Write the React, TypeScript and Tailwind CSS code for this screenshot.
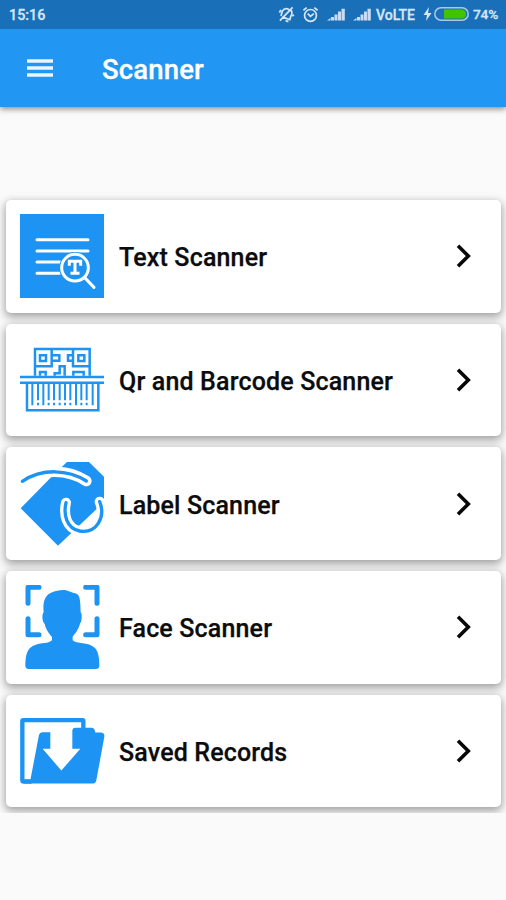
import type { ReactNode } from 'react';

const BLUE = '#1d94f3';

function TextIcon() {
  return (
    <svg viewBox="60 72 252 252" className="size-[84px]" fill="none" stroke="#fff" strokeLinecap="round">
      <rect x="60" y="72" width="252" height="252" fill={BLUE} stroke="none" />
      <path d="M111 149H264M111 183H264M111 216H180M111 250H178" strokeWidth="9" />
      <circle cx="225" cy="233" r="47" fill={BLUE} stroke="none" />
      <circle cx="225" cy="233" r="40" strokeWidth="9" />
      <path d="M254 263L282 292" strokeWidth="9" />
      <path d="M208 223V214H242V223M225 215V250M216 250H234" strokeWidth="9" strokeLinecap="square" />
    </svg>
  );
}

function CodeIcon() {
  return (
    <svg viewBox="60 70 252 252" className="size-[84px]" fill="none" stroke={BLUE} strokeWidth="7.500">
      <path d="M105 183V103H269V183M105 155H155V103M219 103V155H269" />
      <path d="M120 122H138V139H120ZM235 122H253V139H235Z" />
      <path d="M155 122H178V138H155M219 122H204V138H219M120 183V172H137V183M164 183V176H179V155H194V183M220 183V172H251V183" />
      <path d="M60 187H313M60 204H313" />
      <path d="M81 204V287H295V204" />
      <path d="M97 207V272M114 207V257M130 207V272M146 207V257M162 207V257M179 207V257M195 207V257M211 207V257M228 207V272M244 207V257M260 207V257M278 207V272" strokeWidth="6" />
      <path d="M114 264V272M146 264V272M162 264V272M179 264V272M195 264V272M211 264V272M244 264V272M260 264V272" strokeWidth="6" />
    </svg>
  );
}

function LabelIcon() {
  return (
    <svg viewBox="60 66 252 252" className="size-[84px] overflow-visible" fill="none" strokeLinecap="round">
      <path d="M201 66H267L312 110V186L174 317L62 205L157 108Z" fill={BLUE} />
      <path d="M67 124C126 84 205 88 259 123" stroke="#fff" strokeWidth="32" />
      <path d="M67 124C126 84 205 88 259 123" stroke={BLUE} strokeWidth="10" />
      <path d="M198 188C190 224 199 265 239 273C289 281 318 233 299 185" stroke="#fff" strokeWidth="30" />
      <path d="M198 188C190 224 199 265 239 273C289 281 318 233 299 185" stroke={BLUE} strokeWidth="10" />
    </svg>
  );
}

function FaceIcon() {
  return (
    <svg viewBox="60 71 252 252" className="size-[84px]">
      <path d="M117 78H84V126M257 78H291V126M84 172V220H117M291 172V220H257" fill="none" stroke={BLUE} strokeWidth="15" strokeLinecap="round" strokeLinejoin="round" />
      <path d="M187 86C204 85 213 94 226 96C241 99 241 120 242 153C247 157 246 181 240 187C234 209 225 215 218 226V237C230 249 264 241 285 260C295 270 298 291 298 314Q297 323 288 323H86Q77 323 76 314C76 291 79 270 90 260C111 241 144 250 156 237V227C147 216 139 208 134 188C126 181 125 159 131 153C129 128 131 112 145 99C158 90 171 87 187 86Z" fill={BLUE} />
    </svg>
  );
}

function FolderIcon() {
  return (
    <svg viewBox="60 73.500 252 252" className="size-[84px] overflow-visible">
      <path d="M250 135V108Q250 107 248 107H70Q67 107 67 110V287Q67 291 71 291H95" fill="none" stroke={BLUE} strokeWidth="13" strokeLinejoin="round" />
      <path d="M91 287L117 151Q119 143 127 143H151V193H128L184 258L241 193H217V137Q218 130 226 130H276Q284 131 286 144H302Q315 145 313 157L289 287Q287 297 277 297H72L70 286H91Z" fill={BLUE} />
    </svg>
  );
}

function Bars() {
  return (
    <svg viewBox="0 0 18 13" className="h-[13px] w-[18px]" fill="#c9dcf3">
      <path d="M0 12.500L3.500 10V12.500ZM4 9H7V12.500H4ZM7.500 6.500H10.500V12.500H7.500ZM11 3.500H14V12.500H11ZM14.500 0.800H17.800V12.500H14.500Z" />
    </svg>
  );
}

function StatusBar() {
  return (
    <div className="flex h-[28.5px] items-center bg-[#1a70b8] pl-[9px] pr-[8px] font-medium text-[#d6e6f6] [-webkit-text-stroke:0.3px_#d6e6f6]">
      <span className="mt-[2px] w-[36px] text-[14.3px] leading-none">15:16</span>
      <div className="ml-auto flex items-center">
        <svg viewBox="0 0 18 18" className="mr-[7px] size-[17px]" fill="none" stroke="#d6e6f6" strokeWidth="1.800">
          <path d="M3.200 10.500L4.500 5.500Q6.500 2.200 10 3L14.500 5.500Q15.500 8.500 13.500 11L12.500 14.500L4.500 11.500M8 15.500L11 16.500M1.500 7L3 4M15 10.500L17 9.500M2 15.500L15.500 1.500" />
        </svg>
        <svg viewBox="0 0 18 18" className="mr-[8px] size-[17px]" fill="none" stroke="#d6e6f6" strokeWidth="1.800">
          <circle cx="9" cy="10" r="6.300" />
          <path d="M6 8L9 11L12.500 8M1.500 4.500L5 1.800M13 1.800L16.500 4.500" />
        </svg>
        <Bars />
        <span className="w-[8px]" />
        <Bars />
        <span className="ml-[5px] mt-[2px] w-[40px] whitespace-nowrap text-[14px] leading-none">VoLTE</span>
        <svg viewBox="0 0 9 14" className="ml-[7px] h-[14px] w-[9px]" fill="#d6e6f6">
          <path d="M6 0L0.500 8H4L3 14L8.500 6H5Z" />
        </svg>
        <svg viewBox="0 0 35 14" className="ml-[2px] h-[14px] w-[35px]">
          <rect x="0.800" y="0.800" width="33.400" height="12.400" rx="6.200" fill="none" stroke="#a9c9e6" strokeWidth="1.500" />
          <path d="M10 2.500H28Q32 3 32 7T28 11.500H10Z" fill="#42c300" />
        </svg>
        <span className="ml-[4px] mt-[2px] w-[25px] whitespace-nowrap text-[13.7px] leading-none tracking-[-0.2px]">74%</span>
      </div>
    </div>
  );
}

function Row({ icon, label }: { icon: ReactNode; label: string }) {
  return (
    <button className="flex h-[112.7px] w-full shrink-0 items-center rounded-[5px] bg-white pl-[14px] pr-[30px] text-left shadow-[0_3px_8px_1px_rgba(0,0,0,0.36)]">
      {icon}
      <span className="ml-[15px] mt-[3px] whitespace-nowrap text-[25px] font-medium leading-none tracking-[0.16px] text-[#0c0c0c] [-webkit-text-stroke:0.25px_#0c0c0c]">{label}</span>
      <svg viewBox="0 0 15 24" className="ml-auto h-[24px] w-[15px]" fill="none" stroke="#080808" strokeWidth="3.600">
        <path d="M2 1.800L12.300 12L2 22.200" />
      </svg>
    </button>
  );
}

export default function App() {
  return (
    <div className="flex h-[900px] w-[506px] flex-col overflow-hidden bg-[#fafafa] font-['Roboto',sans-serif]">
      <header className="z-10 shrink-0 shadow-[0_2px_6px_rgba(0,0,0,0.45)]">
        <StatusBar />
        <div className="flex h-[78.5px] items-center bg-[#2196f3] pl-[27px]">
          <svg viewBox="0 0 26 20" className="h-[20px] w-[26px]" fill="none" stroke="#eaf5ff" strokeWidth="3.600">
            <path d="M0 3H26M0 10H26M0 17H26" />
          </svg>
          <h1 className="ml-[49px] mt-[3px] text-[27.5px] font-medium leading-none tracking-[0.15px] text-white [-webkit-text-stroke:0.3px_white]">Scanner</h1>
        </div>
      </header>
      <main className="mt-[81px] flex h-[625px] shrink-0 flex-col gap-[11px] overflow-hidden pl-[6px] pr-[5px] pt-[12px]">
        <Row icon={<TextIcon />} label="Text Scanner" />
        <Row icon={<CodeIcon />} label="Qr and Barcode Scanner" />
        <Row icon={<LabelIcon />} label="Label Scanner" />
        <Row icon={<FaceIcon />} label="Face Scanner" />
        <Row icon={<FolderIcon />} label="Saved Records" />
      </main>
    </div>
  );
}
